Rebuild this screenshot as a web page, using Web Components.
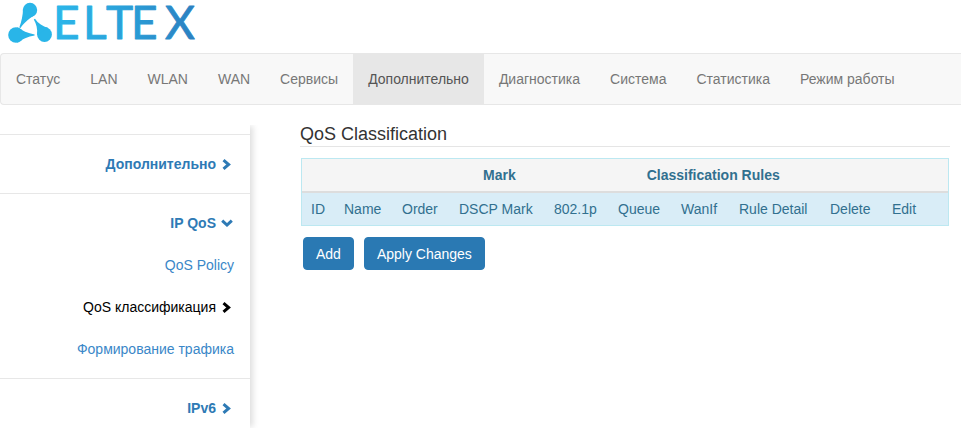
<!DOCTYPE html>
<html lang="ru"><head><meta charset="utf-8"><title>ELTEX</title>
<style>
html,body{margin:0;padding:0;background:#fff;font:14px/20px "Liberation Sans",Arial,sans-serif;color:#333;overflow:hidden}
.cols{display:flex;align-items:flex-start}
</style></head><body>
<eltex-logo></eltex-logo>
<eltex-nav>
<nav-item>Статус</nav-item><nav-item>LAN</nav-item><nav-item>WLAN</nav-item><nav-item>WAN</nav-item><nav-item>Сервисы</nav-item><nav-item active>Дополнительно</nav-item><nav-item>Диагностика</nav-item><nav-item>Система</nav-item><nav-item>Статистика</nav-item><nav-item>Режим работы</nav-item>
</eltex-nav>
<div class="cols">
<side-bar>
<side-section first><side-link head chevron="right">Дополнительно</side-link></side-section>
<side-section>
<side-link head chevron="down">IP QoS</side-link>
<side-link>QoS Policy</side-link>
<side-link current chevron="right">QoS классификация</side-link>
<side-link>Формирование трафика</side-link>
</side-section>
<side-section last><side-link head chevron="right">IPv6</side-link></side-section>
</side-bar>
<qos-panel></qos-panel>
</div>
<script>
function def(name,html,extra){
  const t=document.createElement('template');t.innerHTML=html;
  customElements.define(name,class extends HTMLElement{
    constructor(){super();this.attachShadow({mode:'open'}).appendChild(t.content.cloneNode(true));}
    connectedCallback(){extra&&extra.call(this);}
  });
}
def('eltex-logo',`<style>
:host{display:block;height:53px}
svg{display:block}
text{font:400 46px Lato,"Liberation Sans",sans-serif;stroke-width:.9;stroke-linejoin:round}
</style>
<svg width="220" height="53" viewBox="0 0 220 53">
<defs><linearGradient id="g" gradientUnits="userSpaceOnUse" x1="57" y1="0" x2="197" y2="0"><stop offset="0" stop-color="#2bb6e9"/><stop offset=".5" stop-color="#2a9fd8"/><stop offset="1" stop-color="#2b7fc0"/></linearGradient></defs>
<g fill="#29b5e8">
<circle cx="30" cy="10" r="7.2"/><path d="M23 8.5 C23 15 21.5 22 19.3 27.4 L20.6 28 C23.5 23.5 27 20 35.5 14.5z"/>
<circle cx="16" cy="35" r="7.8"/><path d="M17 27.3 C22 30.5 28 33.6 34.6 34.4 L34.6 35.6 C28 36.4 22 39.5 17 42.7z"/>
<circle cx="44.5" cy="34.5" r="7.4"/><path d="M37.2 35 C37.5 29 36.5 24 33.8 19.6 L35 18.8 C38 23.5 43 26.5 48 28z"/>
</g>
<text x="53 83 106 131 165" y="39" fill="url(#g)" stroke="url(#g)">ELTEX</text>
</svg>`);
def('eltex-nav',`<style>
:host{display:flex;height:52px;box-sizing:border-box;border:1px solid #e7e7e7;border-right:0;border-radius:4px 0 0 4px;background:#f8f8f8}
</style><slot></slot>`);
def('nav-item',`<style>
:host{display:block;padding:15px;color:#777;line-height:20px;height:50px;box-sizing:border-box}
:host([active]){background:#e7e7e7;color:#555}
</style><slot></slot>`);
def('side-bar',`<style>
:host{display:block;flex:none;width:250px;height:303px;margin-top:20px;padding-top:9px;box-sizing:border-box;background:#fff;box-shadow:4px 0 6px -1px rgba(0,0,0,.13);clip-path:inset(0 -12px 0 0)}
</style><slot></slot>`);
def('side-section',`<style>
:host{display:block;border-top:1px solid #e7e7e7;padding:8px 0}
</style><slot></slot>`);
const chev={right:'<polyline points="1.5,1.2 6.6,5.5 1.5,9.8"/>',down:'<polyline points="1.2,1.6 6,6 10.8,1.6"/>'};
def('side-link',`<style>
:host{display:flex;justify-content:flex-end;align-items:center;gap:6px;height:42px;padding-right:16px;color:#3a87c8;box-sizing:border-box;white-space:nowrap}
:host([head]){font-weight:700;color:#2e7ab5;padding-right:19px}
:host([current]){color:#000;padding-right:19px}
svg{display:none;flex:none;fill:none;stroke:currentColor;stroke-width:3}
:host([chevron]) svg{display:block}
</style><slot></slot><svg id="i" width="9" height="11" viewBox="0 0 9 11"></svg>`,function(){
  const c=this.getAttribute('chevron'),s=this.shadowRoot.getElementById('i');
  if(c){s.innerHTML=chev[c];if(c==='down'){s.setAttribute('width','12');s.setAttribute('height','8');s.setAttribute('viewBox','0 0 12 8');this.style.paddingRight='17px';this.style.gap='5px';}}
});
def('qos-panel',`<style>
:host{display:block;flex:none;width:650px;margin:19px 0 0 50px}
h3{margin:0;font:400 18px/20px "Liberation Sans",sans-serif;color:#333;border-bottom:1px solid #e5e5e5;height:22px;box-sizing:content-box}
.tbl{margin:11px 1px 0 1px;border:1px solid #bce8f1;box-sizing:border-box;height:68px}
.h{display:flex;height:34px;box-sizing:border-box;background:#f5f5f5;border-bottom:2px solid #ddd;align-items:center;font-weight:700;color:#31708f;padding-left:181px;gap:131px}
.r{display:grid;grid-template-columns:33px 58px 57px 95px 64px 63px 58px 91px 62px auto;height:32px;padding-left:9px;background:#d9edf7;align-items:center;color:#31708f;white-space:nowrap}
.btns{display:flex;gap:10px;margin:11px 0 0 3px}
button{font:14px/20px "Liberation Sans",sans-serif;color:#fff;background:#2a79b3;border:1px solid #2a79b3;border-radius:4px;padding:5px 12px;height:33px;box-sizing:border-box;margin:0}
</style>
<h3>QoS Classification</h3>
<div class="tbl">
<div class="h"><span>Mark</span><span>Classification Rules</span></div>
<div class="r"><span>ID</span><span>Name</span><span>Order</span><span>DSCP Mark</span><span>802.1p</span><span>Queue</span><span>WanIf</span><span>Rule Detail</span><span>Delete</span><span>Edit</span></div>
</div>
<div class="btns"><button>Add</button><button>Apply Changes</button></div>`);
</script>
</body></html>
